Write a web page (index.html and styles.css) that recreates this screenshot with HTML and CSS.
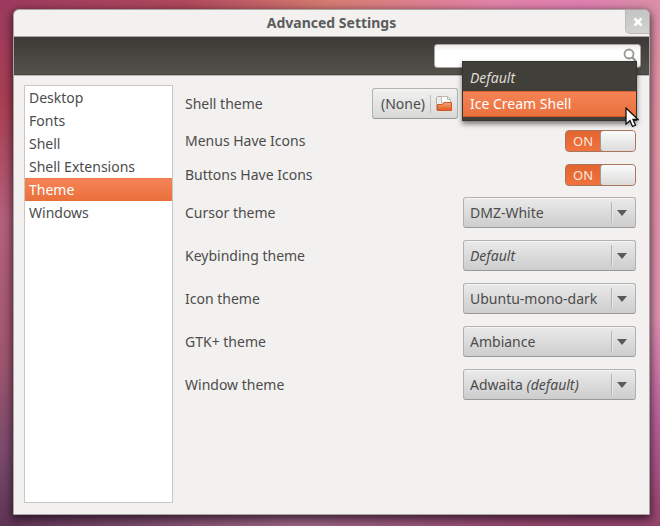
FILE: index.html
```html
<!DOCTYPE html>
<html lang="en">
<head>
  <meta charset="UTF-8" />
  <meta name="viewport" content="width=device-width, initial-scale=1.0"/>
  <title>Advanced Settings</title>
  <link rel="stylesheet" href="styles.css">
</head>
<body>
  <div class="window">
    <header class="titlebar">
      <h1>Advanced Settings</h1>
      <button type="button" class="close" aria-label="Close">
        <svg width="10" height="10" viewBox="0 0 10 10"><path d="M1.5 1.5l7 7M8.5 1.5l-7 7" stroke="#fff" stroke-width="2.5"/></svg>
      </button>
    </header>

    <div class="toolbar">
      <div class="search">
        <input type="search" aria-label="Search" />
        <svg width="16" height="16" viewBox="0 0 16 16" fill="none" stroke="#9a9792"><circle cx="7" cy="6" r="4.5" stroke-width="1.8"/><path d="M10.500 9.500l3 3.500" stroke-width="2.200" stroke-linecap="round"/></svg>
      </div>
    </div>

    <div class="content">
      <nav class="sidebar">
        <a href="#desktop">Desktop</a>
        <a href="#fonts">Fonts</a>
        <a href="#shell">Shell</a>
        <a href="#extensions">Shell Extensions</a>
        <a href="#theme" class="active" aria-current="page">Theme</a>
        <a href="#windows">Windows</a>
      </nav>

      <form class="settings">
        <div class="row">
          <label for="shellTheme">Shell theme</label>
          <div class="controls">
            <button type="button" class="file-button">
              <span>(None)</span>
              <svg width="18" height="18" viewBox="0 0 18 18">
                <path d="M1.5 15.500v-13l1-1h4l1 1.500h3v12z" fill="#eeedeb" stroke="#b0ada9"/>
                <path d="M6.500 8V1.500h6l3 3V8z" fill="#fff" stroke="#bcb9b5"/>
                <path d="M12.500 1.500v3h3" fill="none" stroke="#bcb9b5"/>
                <path d="M2.500 15.500V9.500h5l1.500-2h7.500v8z" fill="url(#folder)" stroke="#cf5a2a"/>
                <defs><linearGradient id="folder" x1="0" y1="0" x2="0" y2="1"><stop offset="0" stop-color="#f7a878"/><stop offset="1" stop-color="#e4561c"/></linearGradient></defs>
              </svg>
            </button>
            <div class="combo">
              <select id="shellTheme"><option></option></select>
              <ul class="menu" role="listbox" aria-label="Shell theme">
                <li role="option" aria-selected="false"><em>Default</em></li>
                <li role="option" aria-selected="true" class="hover">Ice Cream Shell
                  <svg class="pointer" width="14" height="21" viewBox="0 0 14 21"><path d="M1 1v16l4-3.500 2.500 6 3-1.300-2.500-5.700H13z" fill="#fff" stroke="#111" stroke-width="1.300"/></svg>
                </li>
              </ul>
            </div>
          </div>
        </div>

        <div class="group">
          <div class="row">
            <label for="menuIcons">Menus Have Icons</label>
            <div class="switch"><input type="checkbox" id="menuIcons" checked /><span>ON</span></div>
          </div>
          <div class="row">
            <label for="buttonIcons">Buttons Have Icons</label>
            <div class="switch"><input type="checkbox" id="buttonIcons" checked /><span>ON</span></div>
          </div>
        </div>

        <div class="group">
          <div class="row">
            <label for="cursorTheme">Cursor theme</label>
            <div class="combo"><select id="cursorTheme"><option>DMZ-White</option></select></div>
          </div>
          <div class="row">
            <label for="keyTheme">Keybinding theme</label>
            <div class="combo"><select id="keyTheme" class="italic"><option>Default</option></select></div>
          </div>
          <div class="row">
            <label for="iconTheme">Icon theme</label>
            <div class="combo"><select id="iconTheme"><option>Ubuntu-mono-dark</option></select></div>
          </div>
          <div class="row">
            <label for="gtkTheme">GTK+ theme</label>
            <div class="combo"><select id="gtkTheme"><option>Ambiance</option></select></div>
          </div>
          <div class="row">
            <label for="windowTheme">Window theme</label>
            <div class="combo">
              <select id="windowTheme" class="rich">
                <button><selectedcontent></selectedcontent></button>
                <option>Adwaita <em>(default)</em></option>
              </select>
            </div>
          </div>
        </div>
      </form>
    </div>
  </div>
</body>
</html>
```
FILE: styles.css
```css
:root {
  --orange-top: #f68457;
  --orange: #e9703c;
  --text-color: #4c4c4c;
  --bg-color: #f2f1ef;
}
* {
  box-sizing: border-box;
}
body {
  margin: 0;
  min-height: 100vh;
  padding: 9px 10px 11px 13px;
  display: flex;
  color: var(--text-color);
  font-family: "Noto Sans", sans-serif;
  font-size: 14px;
  line-height: 20px;
  /* wallpaper showing round the window */
  background:
    linear-gradient(90deg, #9c3a5e, #b0485c 28%, #d67c72 50%, #e283a8 75%, #e07fb0 88%, #d990a6) top / 100% 12px no-repeat,
    linear-gradient(#9c3a5e, #a93f52 20%, #b4607c 42%, #a0566e 68%, #7a4a6c 86%, #5e3454) left / 20px 100% no-repeat,
    linear-gradient(#d990a6, #e695a4 25%, #dd93b0 60%, #b9609a 80%, #93446a) right / 20px 100% no-repeat,
    linear-gradient(90deg, #5e3454, #9a6584 45%, #93466a 80%, #93446a) bottom / 100% 20px no-repeat,
    #93446a;
}
h1 {
  margin: 0;
  font-size: 14px;
  font-weight: 700;
  color: #5c5c5c;
}
button, input, select {
  font: inherit;
  color: inherit;
  margin: 0;
}
.window {
  flex: 1;
  display: flex;
  flex-direction: column;
  background: var(--bg-color);
  border: 1px solid #a9a5a3;
  border-radius: 6px 6px 0 0;
  box-shadow: 0 3px 9px 1px rgba(20,5,20,0.7);
}

/* Title bar */
.titlebar {
  position: relative;
  display: flex;
  align-items: center;
  justify-content: center;
  height: 27px;
  border-bottom: 1px solid #aaa8a5;
}
.close {
  position: absolute;
  top: 0;
  right: 0;
  display: flex;
  align-items: center;
  justify-content: center;
  width: 24px;
  height: 24px;
  padding: 0;
  border: 1px solid #bbb;
  border-width: 0 0 1px 1px;
  border-radius: 0 5px 0 5px;
  background: linear-gradient(#c4c4c3, #d2d2d1);
}

/* Search toolbar */
.toolbar {
  display: flex;
  justify-content: flex-end;
  padding: 7px 8px 6px;
  background: linear-gradient(#3b3a36, #53514a);
  border-bottom: 1px solid #45443e;
}
.search {
  position: relative;
  width: 207px;
}
.search input {
  display: block;
  width: 100%;
  height: 24px;
  padding: 0 24px 0 6px;
  border: 1px solid #aaa69f;
  border-radius: 3px;
  background: linear-gradient(#ececeb, #fff 6px);
  appearance: none;
}
.search svg {
  position: absolute;
  top: 4px;
  right: 3px;
}

/* Category list + settings */
.content {
  flex: 1;
  display: flex;
  gap: 12px;
  padding: 9px 13px 11px 10px;
  border-top: 1px solid #bdbbb8;
}
.sidebar {
  flex: 0 0 149px;
  display: flex;
  flex-direction: column;
  background: #fff;
  border: 1px solid #c9c7c4;
}
.sidebar a {
  padding: 1px 4px;
  line-height: 21px;
  color: var(--text-color);
  text-decoration: none;
}
.sidebar .active {
  color: #fff;
  background: linear-gradient(var(--orange-top), var(--orange));
  box-shadow: inset 0 1px #ee7a4b;
}
.settings {
  flex: 1;
  display: flex;
  flex-direction: column;
  gap: 11px;
  padding-top: 3px;
}
.group {
  display: flex;
  flex-direction: column;
  gap: 12px;
}
.row, .controls {
  display: flex;
  align-items: center;
  justify-content: space-between;
}
.controls {
  gap: 5px;
}
.file-button, select {
  height: 31px;
  border: 1px solid #b3b1ae;
  border-bottom-color: #9a9896;
  border-radius: 3px;
  background: linear-gradient(#eaeaea, #cdcdcd);
  box-shadow: inset 0 1px #f6f6f6;
}
.file-button {
  display: flex;
  align-items: center;
  gap: 5px;
  padding: 0 4px 0 8px;
  background: linear-gradient(#f1f1f0, #d9d9d8);
}
.file-button svg {
  box-sizing: content-box;
  padding-left: 4px;
  border-left: 1px solid #bdbdbd;
}

/* Drop-downs */
.combo {
  position: relative;
  width: 173px;
}
select {
  display: block;
  width: 100%;
  padding: 0 30px 0 6px;
  appearance: none;
}
select.rich {
  appearance: base-select;
  line-height: 29px;
  min-height: 0;
}
select.rich::picker-icon {
  display: none;
}
.combo::before {
  content: "";
  position: absolute;
  top: 5px;
  right: 23px;
  height: 21px;
  border-left: 1px solid #b5b5b5;
  border-right: 1px solid #e6e6e6;
}
.combo::after {
  content: "";
  position: absolute;
  top: 13px;
  right: 9px;
  border: 5px solid transparent;
  border-top: 6px solid #5a5a5a;
  border-bottom: 0;
}
.italic, em {
  font-style: italic;
}
.menu {
  position: absolute;
  z-index: 1;
  top: -27px;
  left: -1px;
  right: -1px;
  margin: 0;
  padding: 3px 0;
  list-style: none;
  color: #dfdbd2;
  background: #403f3a;
  border: 1px solid #35342f;
  box-shadow: 0 3px 5px rgba(0,0,0,0.5);
}
.menu li {
  position: relative;
  padding: 3px 7px;
}
.menu .hover {
  color: #fff;
  background: linear-gradient(var(--orange-top), var(--orange));
  box-shadow: inset 0 1px #d9622f, inset 0 -1px #c9582a;
}
.pointer {
  position: absolute;
  top: 16px;
  right: -3px;
}

/* Switches */
.switch {
  position: relative;
  width: 71px;
  height: 22px;
}
.switch input {
  display: block;
  width: 100%;
  height: 100%;
  appearance: none;
  border: 1px solid #a8755f;
  border-radius: 4px;
  background: linear-gradient(#e2652f, #f0733f);
}
.switch input::after {
  content: "";
  display: block;
  width: 34px;
  height: 100%;
  margin-left: auto;
  border-left: 1px solid #999;
  border-radius: 3px;
  background: linear-gradient(#fbfbfb, #dcdbda);
}
.switch span {
  position: absolute;
  top: 1px;
  left: 8px;
  font-size: 13px;
  color: #fbe6dc;
  pointer-events: none;
}
```
